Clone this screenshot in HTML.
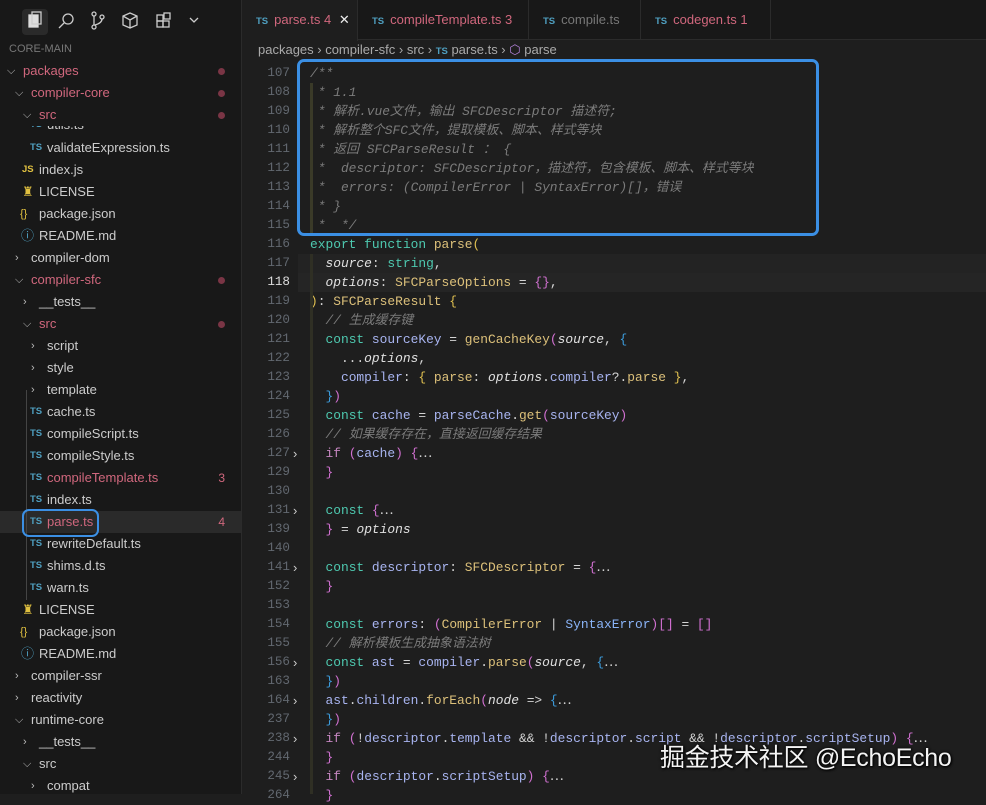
<!DOCTYPE html>
<html><head><meta charset="utf-8"><style>
*{margin:0;padding:0;box-sizing:border-box}
body{width:986px;height:794px;background:#1e1e1e;overflow:hidden;position:relative;font-family:"Liberation Sans","Noto Sans CJK SC",sans-serif;color:#ccc}
#side{position:absolute;left:0;top:0;width:242px;height:794px;background:#181818;border-right:1px solid #2b2b2b}
.it{position:absolute;height:22px;line-height:22px;font-size:13px;color:#cccccc;white-space:nowrap;left:0;width:241px}
.red{color:#d0677d}
.ch{position:absolute;top:0;font-size:11px;color:#bbb}
.ts{font-size:9.5px;font-weight:bold;color:#4f9fc0;position:absolute;top:0}
.dot{position:absolute;right:16px;top:8px;width:7px;height:7px;border-radius:50%;background:#7a3545}
.num{position:absolute;right:16px;color:#d0677d;font-size:12px}
#tabs{position:absolute;left:242px;top:0;width:744px;height:40px;background:#181818;border-bottom:1px solid #2b2b2b}
.tab{position:absolute;top:0;height:40px;line-height:40px;font-size:13px;border-right:1px solid #2b2b2b;padding-left:14px}
.tab b{font-size:9.5px;color:#4f9fc0;margin-right:6px}
#crumb{position:absolute;left:258px;top:40px;font-size:13px;color:#aaa;line-height:19px}
.ln{position:absolute;left:242px;width:48px;text-align:right;font-family:"Liberation Mono",monospace;font-size:12.6px;color:#626870;height:19px;line-height:19px}
.cd{position:absolute;left:310px;font-family:"Liberation Mono","Noto Sans CJK SC",monospace;font-size:12.9px;color:#d4d4d4;height:19px;line-height:19px;white-space:pre}
.fd{position:absolute;left:293px;color:#ccc;font-size:13px;height:19px;line-height:19px}
.c{color:#7b7b7b;font-style:italic}
.k{color:#4ec9b0}.kp{color:#c586c0}.f{color:#dcc07a}.v{color:#a8b4f0}.t{color:#4ec9b0}.i{font-style:italic;color:#e0e0e0}
.p{color:#d070d0}.y{color:#e0c050}.b{color:#3c9cdc}
.box{position:absolute;border:3px solid #3b8fe4;border-radius:7px}
</style></head><body>
<div id="side">
  <div style="position:absolute;left:22px;top:9px;width:26px;height:26px;background:#2a2a2a;border-radius:4px"></div>
  <svg style="position:absolute;left:0;top:0" width="242" height="40" fill="none" stroke="#ccc" stroke-width="1.3">
    <rect x="29" y="15" width="9" height="12" fill="#ddd" stroke="#ddd"/><rect x="32" y="12" width="9" height="12"/>
    <circle cx="68" cy="19" r="5"/><path d="M64 23 L59 28"/>
    <circle cx="94" cy="14" r="2"/><circle cx="94" cy="27" r="2"/><circle cx="102" cy="17" r="2"/><path d="M94 16 V25 M102 19 Q102 23 95 25"/>
    <path d="M130 13 L137 16 V25 L130 28 L123 25 V16 Z M123 16 L130 20 L137 16 M130 20 V28"/>
    <rect x="157" y="15" width="6" height="6"/><rect x="157" y="21" width="6" height="6"/><rect x="163" y="21" width="6" height="6"/><rect x="164" y="13" width="6" height="6"/>
    <path d="M190 18 L194 22 L198 18"/>
  </svg>
  <div class="it" style="top:38px;font-size:11px;color:#777;padding-left:9px">CORE-MAIN</div>
  <div class="it" style="top:60px"><span class="ch" style="left:7px">⌵</span><span class="red" style="position:absolute;left:23px">packages</span><span class="dot"></span></div>
  <div class="it" style="top:82px"><span class="ch" style="left:15px">⌵</span><span class="red" style="position:absolute;left:31px">compiler-core</span><span class="dot"></span></div>
  <div class="it" style="top:126px;height:10px;overflow:hidden"><div style="position:relative;top:-12px;height:22px"><span class="ts" style="left:30px">TS</span><span style="position:absolute;left:47px">utils.ts</span></div></div>
  <div class="it" style="top:104px;height:22px;background:#181818"><span class="ch" style="left:23px">⌵</span><span class="red" style="position:absolute;left:39px">src</span><span class="dot"></span></div>
  <div class="it" style="top:137px"><span class="ts" style="left:30px">TS</span><span style="position:absolute;left:47px">validateExpression.ts</span></div>
  <div class="it" style="top:159px"><span class="ts" style="left:22px;color:#e0c040">JS</span><span style="position:absolute;left:39px">index.js</span></div>
  <div class="it" style="top:181px"><span style="position:absolute;left:22px;color:#e0c040">♜</span><span style="position:absolute;left:39px">LICENSE</span></div>
  <div class="it" style="top:203px"><span style="position:absolute;left:20px;color:#e0c040;font-size:11px">{}</span><span style="position:absolute;left:39px">package.json</span></div>
  <div class="it" style="top:225px"><span style="position:absolute;left:21px;color:#4f9fc0">ⓘ</span><span style="position:absolute;left:39px">README.md</span></div>
  <div class="it" style="top:247px"><span class="ch" style="left:15px">›</span><span style="position:absolute;left:31px">compiler-dom</span></div>
  <div class="it" style="top:269px"><span class="ch" style="left:15px">⌵</span><span class="red" style="position:absolute;left:31px">compiler-sfc</span><span class="dot"></span></div>
  <div class="it" style="top:291px"><span class="ch" style="left:23px">›</span><span style="position:absolute;left:39px">__tests__</span></div>
  <div class="it" style="top:313px"><span class="ch" style="left:23px">⌵</span><span class="red" style="position:absolute;left:39px">src</span><span class="dot"></span></div>
  <div class="it" style="top:335px"><span class="ch" style="left:31px">›</span><span style="position:absolute;left:47px">script</span></div>
  <div class="it" style="top:357px"><span class="ch" style="left:31px">›</span><span style="position:absolute;left:47px">style</span></div>
  <div class="it" style="top:379px"><span class="ch" style="left:31px">›</span><span style="position:absolute;left:47px">template</span></div>
  <div class="it" style="top:401px"><span class="ts" style="left:30px">TS</span><span style="position:absolute;left:47px">cache.ts</span></div>
  <div class="it" style="top:423px"><span class="ts" style="left:30px">TS</span><span style="position:absolute;left:47px">compileScript.ts</span></div>
  <div class="it" style="top:445px"><span class="ts" style="left:30px">TS</span><span style="position:absolute;left:47px">compileStyle.ts</span></div>
  <div class="it" style="top:467px"><span class="ts" style="left:30px">TS</span><span class="red" style="position:absolute;left:47px">compileTemplate.ts</span><span class="num">3</span></div>
  <div class="it" style="top:489px"><span class="ts" style="left:30px">TS</span><span style="position:absolute;left:47px">index.ts</span></div>
  <div class="it" style="top:511px;background:#2a2a2a"><span class="ts" style="left:30px">TS</span><span class="red" style="position:absolute;left:47px">parse.ts</span><span class="num">4</span></div>
  <div class="it" style="top:533px"><span class="ts" style="left:30px">TS</span><span style="position:absolute;left:47px">rewriteDefault.ts</span></div>
  <div class="it" style="top:555px"><span class="ts" style="left:30px">TS</span><span style="position:absolute;left:47px">shims.d.ts</span></div>
  <div class="it" style="top:577px"><span class="ts" style="left:30px">TS</span><span style="position:absolute;left:47px">warn.ts</span></div>
  <div class="it" style="top:599px"><span style="position:absolute;left:22px;color:#e0c040">♜</span><span style="position:absolute;left:39px">LICENSE</span></div>
  <div class="it" style="top:621px"><span style="position:absolute;left:20px;color:#e0c040;font-size:11px">{}</span><span style="position:absolute;left:39px">package.json</span></div>
  <div class="it" style="top:643px"><span style="position:absolute;left:21px;color:#4f9fc0">ⓘ</span><span style="position:absolute;left:39px">README.md</span></div>
  <div class="it" style="top:665px"><span class="ch" style="left:15px">›</span><span style="position:absolute;left:31px">compiler-ssr</span></div>
  <div class="it" style="top:687px"><span class="ch" style="left:15px">›</span><span style="position:absolute;left:31px">reactivity</span></div>
  <div class="it" style="top:709px"><span class="ch" style="left:15px">⌵</span><span style="position:absolute;left:31px">runtime-core</span></div>
  <div class="it" style="top:731px"><span class="ch" style="left:23px">›</span><span style="position:absolute;left:39px">__tests__</span></div>
  <div class="it" style="top:753px"><span class="ch" style="left:23px">⌵</span><span style="position:absolute;left:39px">src</span></div>
  <div class="it" style="top:775px"><span class="ch" style="left:31px">›</span><span style="position:absolute;left:47px">compat</span></div>
  <div style="position:absolute;left:26px;top:390px;width:1px;height:210px;background:#444"></div>
  <div class="box" style="left:22px;top:509px;width:77px;height:28px;border-width:2.5px"></div>
</div>
<div id="tabs">
  <div class="tab" style="left:0;width:116px;background:#1e1e1e;height:41px"><b>TS</b><span class="red">parse.ts 4</span> <span style="color:#eee;margin-left:4px">✕</span></div>
  <div class="tab" style="left:116px;width:171px"><b>TS</b><span class="red">compileTemplate.ts 3</span></div>
  <div class="tab" style="left:287px;width:112px"><b>TS</b><span style="color:#777">compile.ts</span></div>
  <div class="tab" style="left:399px;width:130px"><b>TS</b><span class="red">codegen.ts 1</span></div>
</div>
<div id="crumb">packages › compiler-sfc › src › <b style="font-size:9.5px;color:#4f9fc0">TS</b> parse.ts › <span style="color:#b180d7">⬡</span> parse</div>
<div style="position:absolute;left:298px;top:254px;width:688px;height:19px;background:#232323"></div>
<div style="position:absolute;left:298px;top:273px;width:688px;height:19px;background:#252525"></div>
<div id="code"></div>
<div class="box" style="left:297px;top:59px;width:522px;height:177px"></div>
<div style="position:absolute;left:660px;top:738px;font-size:25px;color:#f4f4f4;text-shadow:0 0 3px #000,1px 1px 2px #000;white-space:nowrap;letter-spacing:-0.3px">掘金技术社区 @EchoEcho</div>
<script>
var L=[
['107','<span class="c">/**</span>'],
['108','<span class="c"> * 1.1</span>'],
['109','<span class="c"> * 解析.vue文件，输出 SFCDescriptor 描述符;</span>'],
['110','<span class="c"> * 解析整个SFC文件，提取模板、脚本、样式等块</span>'],
['111','<span class="c"> * 返回 SFCParseResult ： {</span>'],
['112','<span class="c"> *  descriptor: SFCDescriptor，描述符，包含模板、脚本、样式等块</span>'],
['113','<span class="c"> *  errors: (CompilerError | SyntaxError)[]，错误</span>'],
['114','<span class="c"> * }</span>'],
['115','<span class="c"> *  */</span>'],
['116','<span class="k">export</span> <span class="k">function</span> <span class="f">parse</span><span class="y">(</span>'],
['117','  <span class="i">source</span>: <span class="t">string</span>,'],
['118','  <span class="i">options</span>: <span class="f">SFCParseOptions</span> = <span class="p">{}</span>,'],
['119','<span class="y">)</span>: <span class="f">SFCParseResult</span> <span class="y">{</span>'],
['120','  <span class="c">// 生成缓存键</span>'],
['121','  <span class="k">const</span> <span class="v">sourceKey</span> = <span class="f">genCacheKey</span><span class="p">(</span><span class="i">source</span>, <span class="b">{</span>'],
['122','    ...<span class="i">options</span>,'],
['123','    <span class="v">compiler</span>: <span class="y">{</span> <span class="f">parse</span>: <span class="i">options</span>.<span class="v">compiler</span>?.<span class="f">parse</span> <span class="y">}</span>,'],
['124','  <span class="b">}</span><span class="p">)</span>'],
['125','  <span class="k">const</span> <span class="v">cache</span> = <span class="v">parseCache</span>.<span class="f">get</span><span class="p">(</span><span class="v">sourceKey</span><span class="p">)</span>'],
['126','  <span class="c">// 如果缓存存在，直接返回缓存结果</span>'],
['127','  <span class="kp">if</span> <span class="p">(</span><span class="v">cache</span><span class="p">)</span> <span class="p">{</span>⋯',1],
['129','  <span class="p">}</span>'],
['130',''],
['131','  <span class="k">const</span> <span class="p">{</span>⋯',1],
['139','  <span class="p">}</span> = <span class="i">options</span>'],
['140',''],
['141','  <span class="k">const</span> <span class="v">descriptor</span>: <span class="f">SFCDescriptor</span> = <span class="p">{</span>⋯',1],
['152','  <span class="p">}</span>'],
['153',''],
['154','  <span class="k">const</span> <span class="v">errors</span>: <span class="p">(</span><span class="f">CompilerError</span> | <span class="t" style="color:#8ab4f8">SyntaxError</span><span class="p">)</span><span class="p">[]</span> = <span class="p">[]</span>'],
['155','  <span class="c">// 解析模板生成抽象语法树</span>'],
['156','  <span class="k">const</span> <span class="v">ast</span> = <span class="v">compiler</span>.<span class="f">parse</span><span class="p">(</span><span class="i">source</span>, <span class="b">{</span>⋯',1],
['163','  <span class="b">}</span><span class="p">)</span>'],
['164','  <span class="v">ast</span>.<span class="v">children</span>.<span class="f">forEach</span><span class="p">(</span><span class="i">node</span> =&gt; <span class="b">{</span>⋯',1],
['237','  <span class="b">}</span><span class="p">)</span>'],
['238','  <span class="kp">if</span> <span class="p">(</span>!<span class="v">descriptor</span>.<span class="v">template</span> &amp;&amp; !<span class="v">descriptor</span>.<span class="v">script</span> &amp;&amp; !<span class="v">descriptor</span>.<span class="v">scriptSetup</span><span class="p">)</span> <span class="p">{</span>⋯',1],
['244','  <span class="p">}</span>'],
['245','  <span class="kp">if</span> <span class="p">(</span><span class="v">descriptor</span>.<span class="v">scriptSetup</span><span class="p">)</span> <span class="p">{</span>⋯',1],
['264','  <span class="p">}</span>']];
var h='';
for(var i=0;i<L.length;i++){var t=64+i*19;
h+='<div class="ln" style="top:'+t+'px'+(L[i][0]=='118'?';color:#ddd':'')+'">'+L[i][0]+'</div>';
h+='<div class="cd" style="top:'+t+'px">'+L[i][1]+'</div>';
if(L[i][2])h+='<div class="fd" style="top:'+t+'px">›</div>';}
h+='<div style="position:absolute;left:310px;top:83px;width:3px;height:152px;background:#3a3a28"></div>';
h+='<div style="position:absolute;left:310px;top:254px;width:3px;height:540px;background:#2f2f24"></div>';
document.getElementById('code').innerHTML=h;
</script>
</body></html>
